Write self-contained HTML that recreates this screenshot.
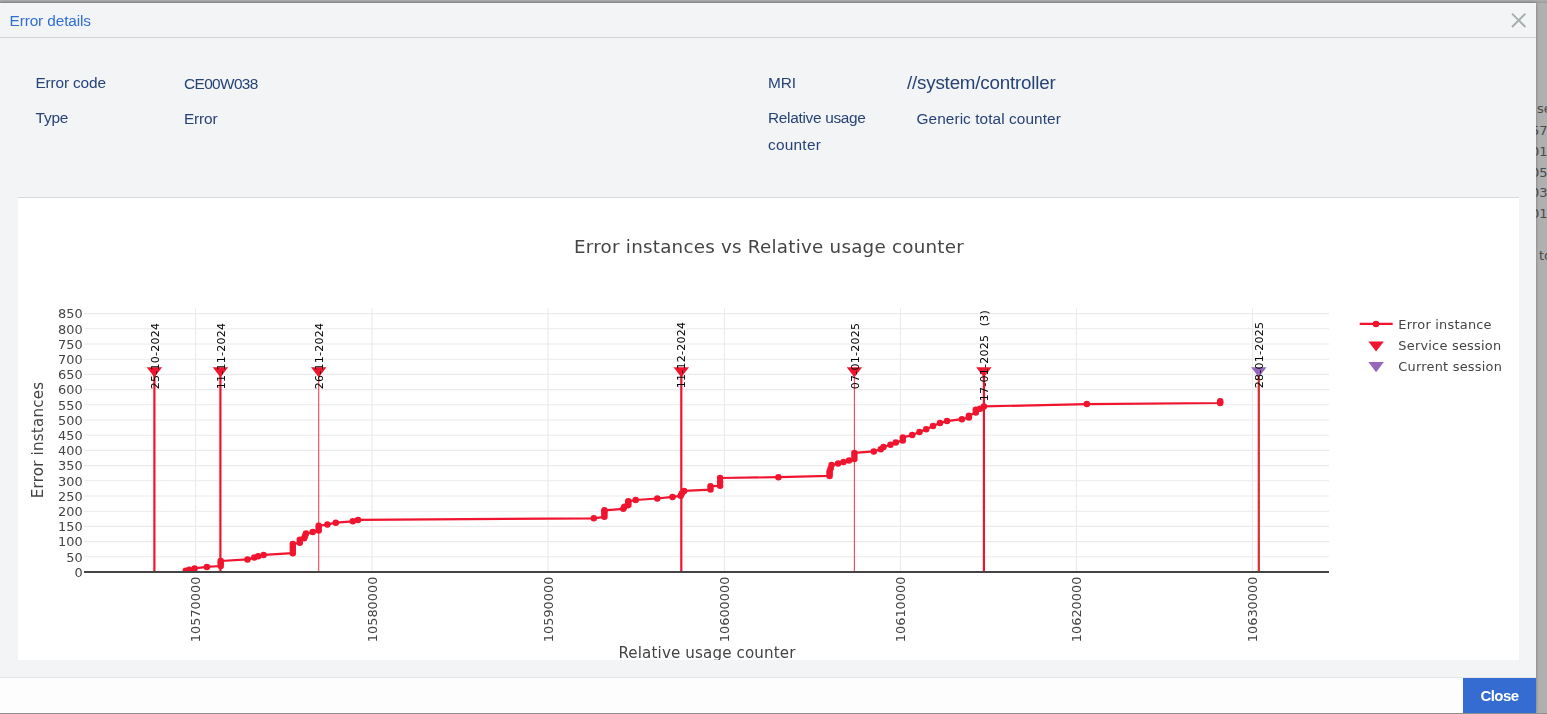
<!DOCTYPE html>
<html lang="en"><head><meta charset="utf-8"><title>Error details</title>
<style>
html,body{margin:0;padding:0}
body{width:1547px;height:714px;overflow:hidden;background:#b0b0b0;position:relative;font-family:"Liberation Sans",sans-serif;}
.bg{position:absolute;left:1536px;top:0;width:11px;height:714px;overflow:hidden;font-family:"DejaVu Sans","Liberation Sans",sans-serif;font-size:13px;color:#4a4a4a}
.bg span{position:absolute;white-space:nowrap}
.shadow{position:absolute;left:0;top:0;width:1547px;height:3px;background:linear-gradient(#b0b0b0,#9a9a9a)}
.modal{will-change:transform;position:absolute;left:0;top:3px;width:1536px;height:710px;background:#f3f4f6;box-shadow:0 0 3px rgba(0,0,0,.35);}
.hdr{position:absolute;left:0;top:0;width:1536px;height:34px;border-bottom:1px solid #d5d8da}
.hdr .t{position:absolute;left:9.5px;top:8px;font-size:15.4px;line-height:19px;color:#2f6fd6;letter-spacing:-.12px;white-space:nowrap}
.x{position:absolute;left:1509px;top:7px;width:20px;height:20px}
.lbl,.val{position:absolute;font-size:15.4px;line-height:27px;color:#274376;white-space:nowrap;letter-spacing:-.15px}
.panel{position:absolute;left:18px;top:194px;width:1501px;height:462px;background:#fff;border-top:1px solid #d5d9da;overflow:hidden}
.panel svg{position:absolute;left:0;top:0}
.ftr{position:absolute;left:0;top:674px;width:1536px;height:35px;background:#fdfdfd;border-top:1px solid #e4e6e8}
.btn{position:absolute;left:1463px;top:-.5px;width:73px;height:35.5px;background:#346cd1;color:#fff;font-weight:bold;font-size:15px;line-height:35px;text-align:center;letter-spacing:-.55px}
.bot{position:absolute;left:0;top:713px;width:1547px;height:1px;background:#8e8e8e}
svg text{font-family:"DejaVu Sans","Liberation Sans",sans-serif;fill:#444}
.tk{font-size:12.9px}
.an{font-size:11px;fill:#000;letter-spacing:.25px}
.ti{font-size:18.3px;letter-spacing:.24px}
.ax{font-size:15.1px;letter-spacing:.2px}
.lg{font-size:12.9px;letter-spacing:.24px}
</style></head><body>
<div class="bg">
<span style="left:1px;top:101px">se</span>
<span style="left:-5px;top:123px">57</span>
<span style="left:-5px;top:144px">01</span>
<span style="left:-5px;top:165px">05</span>
<span style="left:-5px;top:185px">03</span>
<span style="left:-5px;top:206px">01</span>
<span style="left:3px;top:248px">to</span>
</div>
<div class="shadow"></div>
<div class="modal">
 <div class="hdr"><div class="t">Error details</div>
  <svg class="x" viewBox="0 0 20 20"><path d="M3,3.6 L16.4,17 M16.4,3.6 L3,17" stroke="#a7afaf" stroke-width="2" fill="none"/></svg>
 </div>
 <div class="lbl" style="left:35.5px;top:66px">Error code</div>
 <div class="val" style="left:184px;top:67px;letter-spacing:-.62px">CE00W038</div>
 <div class="lbl" style="left:35.5px;top:101px">Type</div>
 <div class="val" style="left:184px;top:102px;letter-spacing:-.15px">Error</div>
 <div class="lbl" style="left:768px;top:66px">MRI</div>
 <div class="val" style="left:907px;top:66px;font-size:18.8px;letter-spacing:-.2px">//system/controller</div>
 <div class="lbl" style="left:768px;top:101px"><span style="letter-spacing:-.3px">Relative usage</span><br><span style="letter-spacing:.25px">counter</span></div>
 <div class="val" style="left:916.5px;top:102px;letter-spacing:.07px">Generic total counter</div>
 <div class="panel"><svg width="1501" height="462" viewBox="0 0 1501 462">
<line x1="177.5" x2="177.5" y1="110.3" y2="374.0" stroke="#eaeaea" stroke-width="1.1"/>
<line x1="354.0" x2="354.0" y1="110.3" y2="374.0" stroke="#eaeaea" stroke-width="1.1"/>
<line x1="530.0" x2="530.0" y1="110.3" y2="374.0" stroke="#eaeaea" stroke-width="1.1"/>
<line x1="706.5" x2="706.5" y1="110.3" y2="374.0" stroke="#eaeaea" stroke-width="1.1"/>
<line x1="882.5" x2="882.5" y1="110.3" y2="374.0" stroke="#eaeaea" stroke-width="1.1"/>
<line x1="1058.5" x2="1058.5" y1="110.3" y2="374.0" stroke="#eaeaea" stroke-width="1.1"/>
<line x1="1234.5" x2="1234.5" y1="110.3" y2="374.0" stroke="#eaeaea" stroke-width="1.1"/>
<line x1="66.0" x2="1311.0" y1="358.8" y2="358.8" stroke="#eaeaea" stroke-width="1.1"/>
<line x1="66.0" x2="1311.0" y1="343.6" y2="343.6" stroke="#eaeaea" stroke-width="1.1"/>
<line x1="66.0" x2="1311.0" y1="328.4" y2="328.4" stroke="#eaeaea" stroke-width="1.1"/>
<line x1="66.0" x2="1311.0" y1="313.2" y2="313.2" stroke="#eaeaea" stroke-width="1.1"/>
<line x1="66.0" x2="1311.0" y1="298.0" y2="298.0" stroke="#eaeaea" stroke-width="1.1"/>
<line x1="66.0" x2="1311.0" y1="282.8" y2="282.8" stroke="#eaeaea" stroke-width="1.1"/>
<line x1="66.0" x2="1311.0" y1="267.6" y2="267.6" stroke="#eaeaea" stroke-width="1.1"/>
<line x1="66.0" x2="1311.0" y1="252.4" y2="252.4" stroke="#eaeaea" stroke-width="1.1"/>
<line x1="66.0" x2="1311.0" y1="237.2" y2="237.2" stroke="#eaeaea" stroke-width="1.1"/>
<line x1="66.0" x2="1311.0" y1="222.0" y2="222.0" stroke="#eaeaea" stroke-width="1.1"/>
<line x1="66.0" x2="1311.0" y1="206.8" y2="206.8" stroke="#eaeaea" stroke-width="1.1"/>
<line x1="66.0" x2="1311.0" y1="191.6" y2="191.6" stroke="#eaeaea" stroke-width="1.1"/>
<line x1="66.0" x2="1311.0" y1="176.4" y2="176.4" stroke="#eaeaea" stroke-width="1.1"/>
<line x1="66.0" x2="1311.0" y1="161.2" y2="161.2" stroke="#eaeaea" stroke-width="1.1"/>
<line x1="66.0" x2="1311.0" y1="146.0" y2="146.0" stroke="#eaeaea" stroke-width="1.1"/>
<line x1="66.0" x2="1311.0" y1="130.8" y2="130.8" stroke="#eaeaea" stroke-width="1.1"/>
<line x1="66.0" x2="1311.0" y1="115.6" y2="115.6" stroke="#eaeaea" stroke-width="1.1"/>
<clipPath id="cp"><rect x="66.0" y="110.3" width="1245.0" height="263.7"/></clipPath><g clip-path="url(#cp)">
<line x1="136.4" x2="136.4" y1="374.0" y2="172.5" stroke="#f0142f" stroke-width="2.2"/>
<line x1="202.4" x2="202.4" y1="374.0" y2="172.5" stroke="#f0142f" stroke-width="2.2"/>
<line x1="300.7" x2="300.7" y1="374.0" y2="172.5" stroke="#f0142f" stroke-width="1.1" stroke-opacity=".8"/>
<line x1="663.3" x2="663.3" y1="374.0" y2="172.5" stroke="#f0142f" stroke-width="2.2"/>
<line x1="836.4" x2="836.4" y1="374.0" y2="172.5" stroke="#f0142f" stroke-width="1.1" stroke-opacity=".8"/>
<line x1="965.9" x2="965.9" y1="374.0" y2="172.5" stroke="#f0142f" stroke-width="2.2"/>
<line x1="1240.8" x2="1240.8" y1="374.0" y2="172.5" stroke="#d32f2f" stroke-width="2.2"/>
<path d="M167.8,372.8 L171.3,371.7 L176.6,370.4 L188.9,368.9 L202.7,368 L202.7,365.5 L202.7,363 L229.5,361.4 L236.3,359.6 L240.2,358.3 L245.6,356.9 L274.8,355.2 L274.8,352 L274.8,349 L274.8,346 L281.8,344.8 L281.8,341.7 L286.1,340.2 L287,338 L288,335.5 L294.7,334 L300.7,332.4 L300.7,330 L300.7,327.8 L309.4,326.5 L317.8,324.7 L334.8,323.3 L340,321.9 L575.8,320.3 L586.4,318.8 L586.4,316 L586.4,313.8 L586.4,312.3 L605.3,310.8 L606.4,308.7 L610.3,307.2 L610.3,305 L610.3,303.3 L617.7,302 L639.3,300.5 L654.5,298.9 L662.7,297.8 L663.8,295.5 L666.1,292.9 L692.5,291.6 L692.5,288.2 L702.1,287.8 L702.1,284 L702.1,280 L760.4,279.2 L811.6,277.9 L811.6,275.5 L811.6,273.5 L812.6,270.4 L813.6,267 L820.1,265.5 L825.5,263.9 L831,262.4 L836.4,261.1 L836.4,258 L836.4,254.9 L855.8,253.4 L862.8,251.3 L865.5,249 L872.5,246.8 L877.8,244.4 L884.8,242.5 L884.8,239.4 L894.2,237.1 L901.5,234 L908.2,231.2 L915,228.1 L922,225 L929,223.1 L943.9,221.2 L950.9,219.5 L950.9,217.8 L957.8,214.6 L957.8,211.8 L962,210.7 L965.9,208.4 L1068.8,206.1 L1202.2,205 L1202.2,203.3" fill="none" stroke="#f0142f" stroke-width="2.2" stroke-linejoin="round"/>
<circle cx="167.8" cy="372.8" r="3.25" fill="#f0142f"/>
<circle cx="171.3" cy="371.7" r="3.25" fill="#f0142f"/>
<circle cx="176.6" cy="370.4" r="3.25" fill="#f0142f"/>
<circle cx="188.9" cy="368.9" r="3.25" fill="#f0142f"/>
<circle cx="202.7" cy="368" r="3.25" fill="#f0142f"/>
<circle cx="202.7" cy="365.5" r="3.25" fill="#f0142f"/>
<circle cx="202.7" cy="363" r="3.25" fill="#f0142f"/>
<circle cx="229.5" cy="361.4" r="3.25" fill="#f0142f"/>
<circle cx="236.3" cy="359.6" r="3.25" fill="#f0142f"/>
<circle cx="240.2" cy="358.3" r="3.25" fill="#f0142f"/>
<circle cx="245.6" cy="356.9" r="3.25" fill="#f0142f"/>
<circle cx="274.8" cy="355.2" r="3.25" fill="#f0142f"/>
<circle cx="274.8" cy="352" r="3.25" fill="#f0142f"/>
<circle cx="274.8" cy="349" r="3.25" fill="#f0142f"/>
<circle cx="274.8" cy="346" r="3.25" fill="#f0142f"/>
<circle cx="281.8" cy="344.8" r="3.25" fill="#f0142f"/>
<circle cx="281.8" cy="341.7" r="3.25" fill="#f0142f"/>
<circle cx="286.1" cy="340.2" r="3.25" fill="#f0142f"/>
<circle cx="287" cy="338" r="3.25" fill="#f0142f"/>
<circle cx="288" cy="335.5" r="3.25" fill="#f0142f"/>
<circle cx="294.7" cy="334" r="3.25" fill="#f0142f"/>
<circle cx="300.7" cy="332.4" r="3.25" fill="#f0142f"/>
<circle cx="300.7" cy="330" r="3.25" fill="#f0142f"/>
<circle cx="300.7" cy="327.8" r="3.25" fill="#f0142f"/>
<circle cx="309.4" cy="326.5" r="3.25" fill="#f0142f"/>
<circle cx="317.8" cy="324.7" r="3.25" fill="#f0142f"/>
<circle cx="334.8" cy="323.3" r="3.25" fill="#f0142f"/>
<circle cx="340" cy="321.9" r="3.25" fill="#f0142f"/>
<circle cx="575.8" cy="320.3" r="3.25" fill="#f0142f"/>
<circle cx="586.4" cy="318.8" r="3.25" fill="#f0142f"/>
<circle cx="586.4" cy="316" r="3.25" fill="#f0142f"/>
<circle cx="586.4" cy="313.8" r="3.25" fill="#f0142f"/>
<circle cx="586.4" cy="312.3" r="3.25" fill="#f0142f"/>
<circle cx="605.3" cy="310.8" r="3.25" fill="#f0142f"/>
<circle cx="606.4" cy="308.7" r="3.25" fill="#f0142f"/>
<circle cx="610.3" cy="307.2" r="3.25" fill="#f0142f"/>
<circle cx="610.3" cy="305" r="3.25" fill="#f0142f"/>
<circle cx="610.3" cy="303.3" r="3.25" fill="#f0142f"/>
<circle cx="617.7" cy="302" r="3.25" fill="#f0142f"/>
<circle cx="639.3" cy="300.5" r="3.25" fill="#f0142f"/>
<circle cx="654.5" cy="298.9" r="3.25" fill="#f0142f"/>
<circle cx="662.7" cy="297.8" r="3.25" fill="#f0142f"/>
<circle cx="663.8" cy="295.5" r="3.25" fill="#f0142f"/>
<circle cx="666.1" cy="292.9" r="3.25" fill="#f0142f"/>
<circle cx="692.5" cy="291.6" r="3.25" fill="#f0142f"/>
<circle cx="692.5" cy="288.2" r="3.25" fill="#f0142f"/>
<circle cx="702.1" cy="287.8" r="3.25" fill="#f0142f"/>
<circle cx="702.1" cy="284" r="3.25" fill="#f0142f"/>
<circle cx="702.1" cy="280" r="3.25" fill="#f0142f"/>
<circle cx="760.4" cy="279.2" r="3.25" fill="#f0142f"/>
<circle cx="811.6" cy="277.9" r="3.25" fill="#f0142f"/>
<circle cx="811.6" cy="275.5" r="3.25" fill="#f0142f"/>
<circle cx="811.6" cy="273.5" r="3.25" fill="#f0142f"/>
<circle cx="812.6" cy="270.4" r="3.25" fill="#f0142f"/>
<circle cx="813.6" cy="267" r="3.25" fill="#f0142f"/>
<circle cx="820.1" cy="265.5" r="3.25" fill="#f0142f"/>
<circle cx="825.5" cy="263.9" r="3.25" fill="#f0142f"/>
<circle cx="831" cy="262.4" r="3.25" fill="#f0142f"/>
<circle cx="836.4" cy="261.1" r="3.25" fill="#f0142f"/>
<circle cx="836.4" cy="258" r="3.25" fill="#f0142f"/>
<circle cx="836.4" cy="254.9" r="3.25" fill="#f0142f"/>
<circle cx="855.8" cy="253.4" r="3.25" fill="#f0142f"/>
<circle cx="862.8" cy="251.3" r="3.25" fill="#f0142f"/>
<circle cx="865.5" cy="249" r="3.25" fill="#f0142f"/>
<circle cx="872.5" cy="246.8" r="3.25" fill="#f0142f"/>
<circle cx="877.8" cy="244.4" r="3.25" fill="#f0142f"/>
<circle cx="884.8" cy="242.5" r="3.25" fill="#f0142f"/>
<circle cx="884.8" cy="239.4" r="3.25" fill="#f0142f"/>
<circle cx="894.2" cy="237.1" r="3.25" fill="#f0142f"/>
<circle cx="901.5" cy="234" r="3.25" fill="#f0142f"/>
<circle cx="908.2" cy="231.2" r="3.25" fill="#f0142f"/>
<circle cx="915" cy="228.1" r="3.25" fill="#f0142f"/>
<circle cx="922" cy="225" r="3.25" fill="#f0142f"/>
<circle cx="929" cy="223.1" r="3.25" fill="#f0142f"/>
<circle cx="943.9" cy="221.2" r="3.25" fill="#f0142f"/>
<circle cx="950.9" cy="219.5" r="3.25" fill="#f0142f"/>
<circle cx="950.9" cy="217.8" r="3.25" fill="#f0142f"/>
<circle cx="957.8" cy="214.6" r="3.25" fill="#f0142f"/>
<circle cx="957.8" cy="211.8" r="3.25" fill="#f0142f"/>
<circle cx="962" cy="210.7" r="3.25" fill="#f0142f"/>
<circle cx="965.9" cy="208.4" r="3.25" fill="#f0142f"/>
<circle cx="1068.8" cy="206.1" r="3.25" fill="#f0142f"/>
<circle cx="1202.2" cy="205" r="3.25" fill="#f0142f"/>
<circle cx="1202.2" cy="203.3" r="3.25" fill="#f0142f"/>
</g>
<line x1="66.0" x2="1311.0" y1="374.0" y2="374.0" stroke="#444" stroke-width="2.1"/>
<path d="M128.66,169.15 H144.14 L136.4,179.2 Z" fill="#f0142f"/>
<path d="M194.66,169.15 H210.14 L202.4,179.2 Z" fill="#f0142f"/>
<path d="M292.96,169.15 H308.44 L300.7,179.2 Z" fill="#f0142f"/>
<path d="M655.56,169.15 H671.04 L663.3,179.2 Z" fill="#f0142f"/>
<path d="M828.66,169.15 H844.14 L836.4,179.2 Z" fill="#f0142f"/>
<path d="M958.16,169.15 H973.64 L965.9,179.2 Z" fill="#f0142f"/>
<path d="M1233.06,169.15 H1248.54 L1240.8,179.2 Z" fill="#9467bd"/>
<text class="an" transform="translate(140.5,158) rotate(-90)" text-anchor="middle" xml:space="preserve">25-10-2024</text>
<text class="an" transform="translate(206.5,158) rotate(-90)" text-anchor="middle" xml:space="preserve">11-11-2024</text>
<text class="an" transform="translate(304.8,158) rotate(-90)" text-anchor="middle" xml:space="preserve">26-11-2024</text>
<text class="an" transform="translate(667.4,157) rotate(-90)" text-anchor="middle" xml:space="preserve">11-12-2024</text>
<text class="an" transform="translate(840.5,158) rotate(-90)" text-anchor="middle" xml:space="preserve">07-01-2025</text>
<text class="an" transform="translate(970.0,170.0) rotate(-90)" text-anchor="middle" xml:space="preserve">17-01-2025</text>
<text class="an" transform="translate(1244.9,157) rotate(-90)" text-anchor="middle" xml:space="preserve">28-01-2025</text>
<text class="an" transform="translate(970.0,120.2) rotate(-90)" text-anchor="middle">(3)</text>
<text class="tk" x="64.7" y="378.7" text-anchor="end">0</text>
<text class="tk" x="64.7" y="363.5" text-anchor="end">50</text>
<text class="tk" x="64.7" y="348.3" text-anchor="end">100</text>
<text class="tk" x="64.7" y="333.1" text-anchor="end">150</text>
<text class="tk" x="64.7" y="317.9" text-anchor="end">200</text>
<text class="tk" x="64.7" y="302.7" text-anchor="end">250</text>
<text class="tk" x="64.7" y="287.5" text-anchor="end">300</text>
<text class="tk" x="64.7" y="272.3" text-anchor="end">350</text>
<text class="tk" x="64.7" y="257.1" text-anchor="end">400</text>
<text class="tk" x="64.7" y="241.9" text-anchor="end">450</text>
<text class="tk" x="64.7" y="226.7" text-anchor="end">500</text>
<text class="tk" x="64.7" y="211.5" text-anchor="end">550</text>
<text class="tk" x="64.7" y="196.3" text-anchor="end">600</text>
<text class="tk" x="64.7" y="181.1" text-anchor="end">650</text>
<text class="tk" x="64.7" y="165.9" text-anchor="end">700</text>
<text class="tk" x="64.7" y="150.7" text-anchor="end">750</text>
<text class="tk" x="64.7" y="135.5" text-anchor="end">800</text>
<text class="tk" x="64.7" y="120.3" text-anchor="end">850</text>
<text class="tk" transform="translate(182.2,378.6) rotate(-90)" text-anchor="end">10570000</text>
<text class="tk" transform="translate(358.7,378.6) rotate(-90)" text-anchor="end">10580000</text>
<text class="tk" transform="translate(534.7,378.6) rotate(-90)" text-anchor="end">10590000</text>
<text class="tk" transform="translate(711.2,378.6) rotate(-90)" text-anchor="end">10600000</text>
<text class="tk" transform="translate(887.2,378.6) rotate(-90)" text-anchor="end">10610000</text>
<text class="tk" transform="translate(1063.2,378.6) rotate(-90)" text-anchor="end">10620000</text>
<text class="tk" transform="translate(1239.2,378.6) rotate(-90)" text-anchor="end">10630000</text>
<text class="ti" x="751" y="54.7" text-anchor="middle">Error instances vs Relative usage counter</text>
<text class="ax" x="689" y="460.1" text-anchor="middle" style="letter-spacing:.14px">Relative usage counter</text>
<text class="ax" transform="translate(24.5,242) rotate(-90)" text-anchor="middle">Error instances</text>
<line x1="1341.7" x2="1374.7" y1="125.9" y2="125.9" stroke="#f0142f" stroke-width="2.2"/>
<circle cx="1358" cy="125.9" r="3.25" fill="#f0142f"/>
<path d="M1350.36,143.4 H1365.84 L1358.1,153.45 Z" fill="#f0142f"/>
<path d="M1350.36,164.1 H1365.84 L1358.1,174.15 Z" fill="#9467bd"/>
<text class="lg" x="1380.3" y="130.6">Error instance</text>
<text class="lg" x="1380.3" y="152.1">Service session</text>
<text class="lg" x="1380.3" y="172.6">Current session</text>
 </svg></div>
 <div class="ftr"><div class="btn">Close</div></div>
</div>
<div class="bot"></div>
</body></html>
